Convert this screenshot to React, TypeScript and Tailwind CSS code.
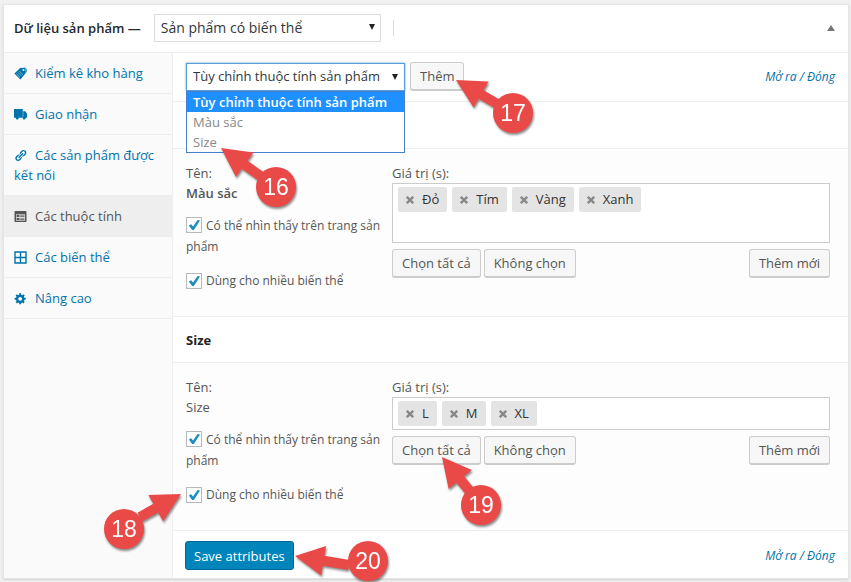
import React, { useState } from 'react'

type Point = [number, number]

const TABS = [
    { id: 'inventory', label: 'Kiểm kê kho hàng', icon: <TagIcon /> },
    { id: 'shipping', label: 'Giao nhận', icon: <TruckIcon /> },
    { id: 'linked', label: 'Các sản phẩm được kết nối', icon: <LinkIcon /> },
    { id: 'attributes', label: 'Các thuộc tính', icon: <FormIcon /> },
    { id: 'variations', label: 'Các biến thể', icon: <GridIcon /> },
    { id: 'advanced', label: 'Nâng cao', icon: <GearIcon /> },
]

const TAXONOMIES = ['Tùy chỉnh thuộc tính sản phẩm', 'Màu sắc', 'Size']

function TagIcon() {
    return (
        <svg viewBox="0 0 13 13" className="size-[13px]" fill="currentColor">
            <path fillRule="evenodd" d="M.4 6.6 6.2.9 10.2.7l1.3 1.1.3 4.3-5.4 6.3zM9.4 2a1 1 0 1 0 .1 2 1 1 0 0 0-.1-2z" />
            <path d="m2.4 6.8 3.6 3.6M3.8 5.4l3.6 3.6M5.2 4l3.6 3.6" stroke="#fff" strokeWidth=".7" strokeOpacity=".65" />
            <path d="M10.6.5 12.4 2v3.2" stroke="currentColor" strokeWidth=".7" fill="none" />
        </svg>
    )
}

function TruckIcon() {
    return (
        <svg viewBox="0 0 13 13" className="size-[13px]" fill="currentColor">
            <path d="M0 1h8.8v8.8H0zM9.2 3.2h2.2L13 5.8v4H9.2z" />
            <circle cx="3.2" cy="10" r="1.5" />
            <circle cx="10.2" cy="10" r="1.5" />
        </svg>
    )
}

function LinkIcon() {
    return (
        <svg viewBox="0 0 20 20" className="size-[13px]" fill="currentColor">
            <path d="M17.74 2.76c1.68 1.69 1.68 4.41 0 6.1l-1.53 1.52c-1.12 1.12-2.7 1.47-4.14 1.09l2.62-2.61.76-.77.76-.76c.84-.84.84-2.2 0-3.04-.84-.85-2.2-.85-3.04 0l-.77.76-3.38 3.38c-.37-1.44-.02-3.02 1.1-4.14l1.52-1.53c1.69-1.68 4.42-1.68 6.1 0zM8.59 13.43l5.34-5.34c.42-.42.42-1.1 0-1.52-.44-.43-1.13-.39-1.53 0l-5.33 5.34c-.42.42-.42 1.1 0 1.52.44.43 1.13.39 1.52 0zm-.76 2.29l4.14-4.15c.38 1.44.03 3.02-1.09 4.14l-1.52 1.53c-1.69 1.68-4.41 1.68-6.1 0-1.68-1.68-1.68-4.42 0-6.1l1.53-1.52c1.12-1.12 2.7-1.47 4.14-1.1l-4.14 4.15c-.85.84-.85 2.2 0 3.05.84.84 2.2.84 3.04 0z" />
        </svg>
    )
}

function FormIcon() {
    return (
        <svg viewBox="0 0 13 13" className="size-[13px]">
            <rect x=".5" y="1" width="12" height="11" rx=".8" fill="currentColor" />
            <path d="M2 4.3h9v6.4H2z" fill="#ddd" />
            <path d="M2.6 5h2.8v2.1H2.6zM2.6 8h2.8v2.1H2.6zM6.2 5.4h4.2v1.3H6.2zM6.2 8.4h4.2v1.3H6.2z" fill="currentColor" />
        </svg>
    )
}

function GridIcon() {
    return (
        <svg viewBox="0 0 13 13" className="size-[13px]" fill="none" stroke="currentColor" strokeWidth="1.4">
            <path d="M1 1h11v11H1zM6.5 1v11M1 6.5h11" />
        </svg>
    )
}

function GearIcon() {
    return (
        <svg viewBox="0 0 20 20" className="size-[13px]" fill="currentColor">
            <path d="M18 12h-2.18c-.17.7-.44 1.35-.81 1.93l1.54 1.54-2.1 2.1-1.54-1.54c-.58.36-1.23.63-1.91.79V19H8v-2.18c-.68-.16-1.33-.43-1.91-.79l-1.54 1.54-2.12-2.12 1.54-1.54c-.36-.58-.63-1.23-.79-1.91H1V9.03h2.17c.16-.7.44-1.35.8-1.94L2.43 5.55l2.1-2.1 1.54 1.54c.58-.37 1.24-.64 1.93-.81V2h3v2.18c.68.16 1.33.43 1.91.79l1.54-1.54 2.12 2.12-1.54 1.54c.36.59.64 1.24.8 1.94H18V12zm-8.5 1.5c1.66 0 3-1.34 3-3s-1.34-3-3-3-3 1.34-3 3 1.34 3 3 3z" />
        </svg>
    )
}

function Caret({ className }: { className: string }) {
    return (
        <svg viewBox="0 0 6 6" className={`pointer-events-none absolute size-[6px] text-[#222] ${className}`} fill="currentColor">
            <path d="M0 0h6L3 6z" />
        </svg>
    )
}

// Numbered pin. The arrow tip sits on the wrapper's origin, the rest is relative to it.
function Callout({ n, centre, tail = centre, className }: { n: number; centre: Point; tail?: Point; className: string }) {
    const len = Math.hypot(tail[0], tail[1])
    const [ux, uy] = [tail[0] / len, tail[1] / len]
    const at = (along: number, side: number) => `${ux * along - uy * side},${uy * along + ux * side}`
    const arrow = [at(0, 0), at(29, 15), at(29, 5), at(len, 5), at(len, -5), at(29, -5), at(29, -15)].join(' ')

    return (
        <span className={`pointer-events-none absolute z-20 size-0 ${className}`}>
            <svg width="1" height="1" className="overflow-visible drop-shadow-[1px_2px_1px_rgba(0,0,0,0.45)]">
                <polygon points={arrow} fill="#e94a47" />
                <circle cx={centre[0]} cy={centre[1]} r="20" fill="#e94a47" />
                <text x={centre[0]} y={centre[1] + 8} textAnchor="middle" fill="#fff" className="font-['Liberation_Sans',sans-serif] text-[23px]">
                    {n}
                </text>
            </svg>
        </span>
    )
}

function Button({ children }: { children: React.ReactNode }) {
    return (
        <button type="button" className="block h-[29px] rounded-[3px] border border-b-2 border-[#ccc] bg-[#f7f7f7] px-[9px] text-[13px] leading-[26px] whitespace-nowrap text-[#555]">
            {children}
        </button>
    )
}

function Check({ label }: { label: string }) {
    const [checked, setChecked] = useState(true)
    return (
        <label className="block text-[12px] leading-[21px]">
            <span className="relative mr-1 mb-[3px] inline-block size-4 align-middle">
                <input
                    type="checkbox"
                    checked={checked}
                    onChange={() => setChecked(!checked)}
                    className="block size-4 appearance-none border border-[#b4b9be] bg-white"
                />
                {checked && (
                    <svg viewBox="0 0 16 16" className="pointer-events-none absolute inset-0 size-4" fill="#1e8cbe">
                        <path d="M2.8 8.4 5.2 7.2 7 9.4 11.6 3 14 3.4 7.8 13H6.2z" />
                    </svg>
                )}
            </span>
            {label}
        </label>
    )
}

function ToggleLinks() {
    return (
        <span className="ml-auto text-[12px] leading-[29px] text-[#0073aa] italic">
            <a href="#expand">Mở ra</a> / <a href="#close">Đóng</a>
        </span>
    )
}

interface AttributeProps {
    name: string
    title?: string
    strong?: boolean
    terms: string[]
    boxClass: string
    checkCallout?: React.ReactNode
    selectCallout?: React.ReactNode
}

function Attribute({ name, title, strong, terms, boxClass, checkCallout, selectCallout }: AttributeProps) {
    return (
        <section className="border-b border-[#eee]">
            <h3 className="h-[46px] border-b border-[#eee] bg-white pl-[13px] text-[13px] leading-[46px] font-bold text-[#222]">{title}</h3>
            <div className="flex h-[167px] bg-[#fdfdfd] pt-[14px] pr-[18px] pl-[13px]">
                <div className="w-[206px] shrink-0">
                    <div className="text-[13px] leading-5">Tên:</div>
                    <div className={strong ? 'text-[13px] leading-5 font-semibold' : 'text-[13px] leading-5'}>{name}</div>
                    <div className="mt-3 flex flex-col gap-[13px]">
                        <Check label="Có thể nhìn thấy trên trang sản phẩm" />
                        <div className="relative">
                            <Check label="Dùng cho nhiều biến thể" />
                            {checkCallout}
                        </div>
                    </div>
                </div>
                <div className="min-w-0 flex-1">
                    <div className="text-[13px] leading-5">Giá trị (s):</div>
                    <ul className={`flex flex-wrap content-start gap-[5px] border border-[#ccc] bg-white p-[3px] pl-[5px] ${boxClass}`}>
                        {terms.map((term) => (
                            <li key={term} className="flex h-[25px] items-center rounded-[2px] bg-[#e4e4e4] px-2 text-[13px] text-[#333]">
                                <button type="button" aria-label={`Remove ${term}`} className="mr-2 text-[#888]">
                                    <svg viewBox="0 0 8 8" className="size-2" stroke="currentColor" strokeWidth="2.4">
                                        <path d="m.8.8 6.4 6.4M7.2.8.8 7.2" />
                                    </svg>
                                </button>
                                {term}
                            </li>
                        ))}
                    </ul>
                    <div className="mt-[6px] flex gap-[3px]">
                        <div className="relative">
                            <Button>Chọn tất cả</Button>
                            {selectCallout}
                        </div>
                        <Button>Không chọn</Button>
                        <div className="ml-auto">
                            <Button>Thêm mới</Button>
                        </div>
                    </div>
                </div>
            </div>
        </section>
    )
}

export default function App() {
    const [tab, setTab] = useState('attributes')
    const [taxonomy, setTaxonomy] = useState(TAXONOMIES[0])

    return (
        <div className="min-h-screen bg-[#f1f1f1] pt-1 pr-[2px] pb-1 pl-[3px] font-['Open_Sans',sans-serif] text-[13px] text-[#555]">
            <div className="border border-[#e5e5e5] bg-white shadow-sm">
                <header className="flex h-12 items-center border-b border-[#eee] pr-[13px] pb-[2px] pl-[10px]">
                    <label htmlFor="product-type" className="text-[13px] leading-5 font-semibold text-[#23282d]">
                        Dữ liệu sản phẩm —
                    </label>
                    <div className="relative ml-[13px]">
                        <select id="product-type" className="block h-7 w-[227px] appearance-none border border-[#ddd] bg-white px-[6px] text-[14px] text-[#32373c]">
                            <option>Sản phẩm có biến thể</option>
                        </select>
                        <Caret className="top-[10px] right-[6px]" />
                    </div>
                    <span className="ml-3 h-4 border-l border-[#ddd]" />
                    <button type="button" aria-label="Toggle panel" className="ml-auto text-[#72777c]">
                        <svg viewBox="0 0 8 6" className="h-[6px] w-2" fill="currentColor">
                            <path d="M4 0 8 6H0z" />
                        </svg>
                    </button>
                </header>

                <div className="flex">
                    <nav className="w-[169px] shrink-0 border-r border-[#eee] bg-[#fafafa]">
                        {TABS.map((item) => (
                            <a
                                key={item.id}
                                href={`#${item.id}`}
                                onClick={() => setTab(item.id)}
                                className={`block border-b border-[#eee] py-[10px] pr-3 pl-[10px] text-[13px] leading-5 ${tab === item.id ? 'bg-[#eee] text-[#555]' : 'text-[#0073aa]'}`}
                            >
                                <span className="mr-2 mb-[3px] inline-block h-[13px] align-middle">{item.icon}</span>
                                {item.label}
                            </a>
                        ))}
                    </nav>

                    <main className="min-w-0 flex-1">
                        <div className="flex h-[49px] items-start border-b border-[#eee] px-[13px] pt-[9px]">
                            <div className="flex items-end gap-[5px]">
                                <div className="relative">
                                    <select
                                        aria-label="Thuộc tính"
                                        value={taxonomy}
                                        onChange={(e) => setTaxonomy(e.target.value)}
                                        className="block h-7 w-[219px] appearance-none border border-[#5b9dd9] bg-white px-[6px] text-[13px] text-[#32373c] shadow-[0_0_2px_rgba(30,140,190,0.8)]"
                                    >
                                        {TAXONOMIES.map((name) => (
                                            <option key={name}>{name}</option>
                                        ))}
                                    </select>
                                    <Caret className="top-[11px] right-[7px]" />
                                    <ul role="listbox" className="absolute top-full left-0 z-10 w-full border border-[#4a7ccc] bg-white text-[13px] leading-5 text-[#888]">
                                        {TAXONOMIES.map((name) => (
                                            <li
                                                key={name}
                                                role="option"
                                                aria-selected={name === taxonomy}
                                                onClick={() => setTaxonomy(name)}
                                                className={`px-[6px] whitespace-nowrap ${name === taxonomy ? 'bg-[#1e90ff] font-semibold text-white' : ''}`}
                                            >
                                                {name}
                                            </li>
                                        ))}
                                    </ul>
                                    <Callout n={16} centre={[55, 39]} className="top-[85px] left-[35px]" />
                                </div>
                                <div className="relative">
                                    <Button>Thêm</Button>
                                    <Callout n={17} centre={[57, 33]} className="top-[18px] left-[46px]" />
                                </div>
                            </div>
                            <ToggleLinks />
                        </div>

                        <div className="pt-px">
                            <Attribute name="Màu sắc" strong terms={['Đỏ', 'Tím', 'Vàng', 'Xanh']} boxClass="h-[60px]" />
                            <Attribute
                                name="Size"
                                title="Size"
                                terms={['L', 'M', 'XL']}
                                boxClass="h-[33px]"
                                checkCallout={<Callout n={18} centre={[-57, 35]} tail={[-41, 23]} className="top-[10px] -left-[5px]" />}
                                selectCallout={<Callout n={19} centre={[39, 48]} className="top-[21px] left-[50px]" />}
                            />
                        </div>

                        <footer className="flex h-[47px] items-start pt-[10px] pr-[13px] pl-3">
                            <div className="relative">
                                <button type="button" className="block h-[29px] rounded-[3px] border border-[#006799] bg-[#0085ba] px-2 text-[13px] leading-[26px] text-white">
                                    Save attributes
                                </button>
                                <Callout n={20} centre={[73, 5]} tail={[54, 9]} className="top-[15px] left-[110px]" />
                            </div>
                            <ToggleLinks />
                        </footer>
                    </main>
                </div>
            </div>
        </div>
    )
}
